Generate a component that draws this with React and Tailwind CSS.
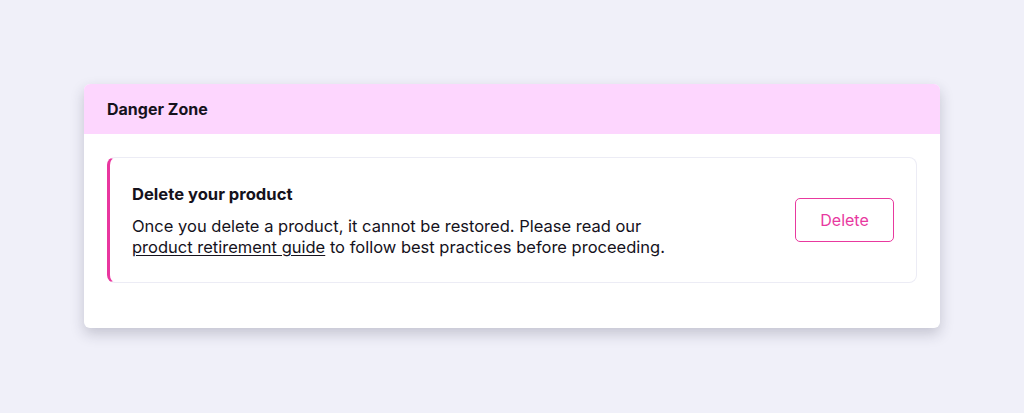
import React from "react";

const DangerZone = () => {
  return (
    <div
      className="min-h-screen bg-[#f0f0f9] pt-[84px] px-[84px]"
      style={{ fontFamily: "Inter, 'Noto Sans', sans-serif" }}
    >
      <div className="w-[856px] bg-white rounded-[6px] overflow-hidden shadow-[0_6px_14px_rgba(40,40,70,0.22)]">
        <div className="h-[50px] bg-[#fdd6fe] flex items-center px-[23px]">
          <h2 className="text-[16px] font-bold text-[#15121c]">Danger Zone</h2>
        </div>

        <div className="px-[23px] pt-[23px] pb-[45px]">
          <div className="flex items-center justify-between h-[126px] border border-[#ececf5] border-l-[3px] border-l-[#e9369f] rounded-[8px] pl-[22px] pr-[22px]">
            <div>
              <h3 className="text-[16.6px] font-bold text-[#15121c] mb-[10px]">
                Delete your product
              </h3>
              <p className="text-[16.5px] leading-[21px] text-[#15121c]">
                Once you delete a product, it cannot be restored. Please read our
                <br />
                <a href="#" className="underline underline-offset-2">
                  product retirement guide
                </a>{" "}
                to follow best practices before proceeding.
              </p>
            </div>
            <button
              type="button"
              className="w-[99px] h-[44px] border-[1.5px] border-[#e8399f] rounded-[5px] text-[#e8399f] text-[16px]"
            >
              Delete
            </button>
          </div>
        </div>
      </div>
    </div>
  );
};

export default function App() {
  return <DangerZone />;
}
